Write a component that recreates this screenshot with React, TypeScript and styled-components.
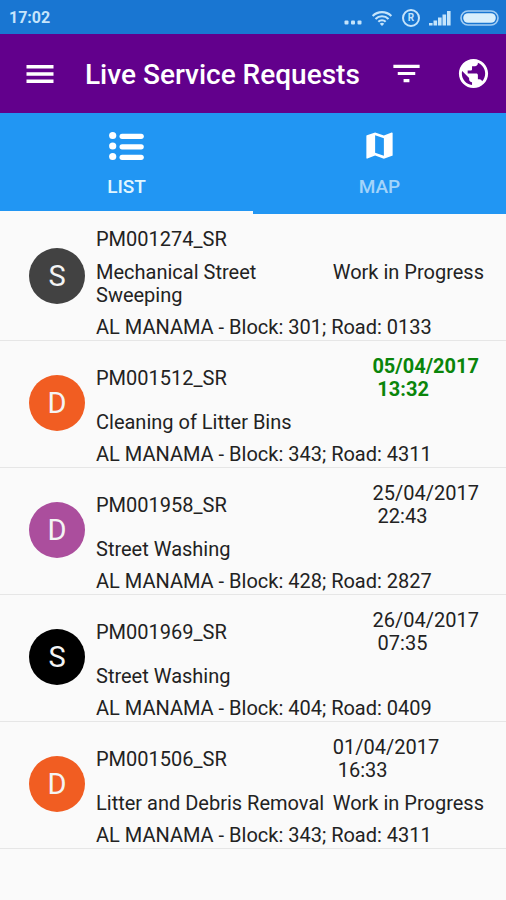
import React from "react";
import styled, { createGlobalStyle } from "styled-components";

const GlobalStyle = createGlobalStyle`
  * { box-sizing: border-box; }
  body {
    margin: 0;
    background: #fafafa;
    color: #222;
    font-family: Roboto, "Liberation Sans", sans-serif;
  }
`;

const Screen = styled.div`
  min-height: 100vh;
  background: #fafafa;
`;

const StatusBar = styled.div`
  height: 34px;
  padding: 2px 7px 0 9px;
  display: flex;
  align-items: center;
  justify-content: space-between;
  background: #1976d2;
  color: #c5e4fb;
`;

const Clock = styled.time`
  font-size: 16px;
  line-height: 20px;
  font-weight: 700;
`;

const StatusIcons = styled.div`
  display: flex;
  align-items: center;
  gap: 9px;
`;

const Registered = styled.span`
  width: 18px;
  height: 18px;
  border: 2px solid currentColor;
  border-radius: 50%;
  display: flex;
  align-items: center;
  justify-content: center;
  font-size: 10px;
  line-height: 10px;
  font-weight: 700;
`;

const AppBar = styled.header`
  height: 79px;
  padding: 0 15px 0 22px;
  display: flex;
  align-items: center;
  background: #62008c;
  color: #fff;
`;

const Title = styled.h1`
  flex: 1;
  margin: 0 0 0 27px;
  padding-top: 3px;
  font-size: 28px;
  line-height: 36px;
  font-weight: 500;
  white-space: nowrap;
`;

const Actions = styled.div`
  display: flex;
  gap: 32px;
`;

const IconButton = styled.button`
  padding: 0;
  border: 0;
  background: none;
  color: inherit;
  display: flex;
  cursor: pointer;
`;

const Tabs = styled.div`
  display: grid;
  grid-template-columns: 1fr 1fr;
  background: #2196f3;
`;

const Tab = styled.button<{ $active?: boolean }>`
  height: 101px;
  padding: 15px 0 0;
  border: 0;
  border-bottom: 3px solid ${(p) => (p.$active ? "#fafafa" : "#2196f3")};
  background: none;
  color: #fff;
  display: flex;
  flex-direction: column;
  align-items: center;
  gap: 12px;
  font-family: inherit;
  cursor: pointer;
`;

const TabLabel = styled.span<{ $active?: boolean }>`
  font-size: 19px;
  line-height: 24px;
  font-weight: 500;
  color: ${(p) => (p.$active ? "#e0f6ff" : "#a3d4fa")};
`;

const List = styled.ul`
  margin: 0;
  padding: 0;
  list-style: none;
  font-size: 20px;
  line-height: 23px;
`;

const Row = styled.li`
  padding: 0 22px 0 29px;
  display: flex;
  align-items: center;
  gap: 11px;
  border-bottom: 1px solid #e6e6e6;
`;

const Avatar = styled.div<{ $color: string }>`
  flex: none;
  width: 56px;
  height: 56px;
  margin-bottom: 2px;
  border-radius: 50%;
  background: ${(p) => p.$color};
  color: #f4f4f4;
  display: flex;
  align-items: center;
  justify-content: center;
  font-size: 29px;
  line-height: 36px;
`;

const Details = styled.div`
  flex: 1;
  padding: 14px 0 1px;
  display: grid;
  grid-template-columns: 1fr auto;
  column-gap: 8px;
`;

const Reference = styled.div`
  align-self: center;
`;

const Schedule = styled.div<{ $done?: boolean }>`
  grid-column: 2;
  white-space: pre;
  font-weight: ${(p) => (p.$done ? 700 : 400)};
  color: ${(p) => (p.$done ? "#0a850a" : "inherit")};
`;

const Category = styled.div`
  grid-column: 1;
  margin-top: 10px;
`;

const Status = styled.div`
  grid-column: 2;
  margin-top: 10px;
  white-space: nowrap;
`;

const Address = styled.div`
  grid-column: 1 / -1;
  margin-top: 9px;
`;

type Request = {
  id: string;
  letter: string;
  color: string;
  category: string;
  address: string;
  date?: string;
  time?: string;
  status?: string;
  done?: boolean;
};

const requests: Request[] = [
  { id: "PM001274_SR", letter: "S", color: "#424242", category: "Mechanical Street Sweeping", address: "AL MANAMA - Block: 301; Road: 0133", status: "Work in Progress" },
  { id: "PM001512_SR", letter: "D", color: "#f15d22", category: "Cleaning of Litter Bins", address: "AL MANAMA - Block: 343; Road: 4311", date: "05/04/2017", time: "13:32", done: true },
  { id: "PM001958_SR", letter: "D", color: "#ab4e9d", category: "Street Washing", address: "AL MANAMA - Block: 428; Road: 2827", date: "25/04/2017", time: "22:43" },
  { id: "PM001969_SR", letter: "S", color: "#000", category: "Street Washing", address: "AL MANAMA - Block: 404; Road: 0409", date: "26/04/2017", time: "07:35" },
  { id: "PM001506_SR", letter: "D", color: "#f15d22", category: "Litter and Debris Removal", address: "AL MANAMA - Block: 343; Road: 4311", date: "01/04/2017", time: "16:33", status: "Work in Progress" },
];

const Glyph = ({ d, size = 35 }: { d: string; size?: number }) => (
  <svg width={size} height={size} viewBox="0 0 24 24" fill="currentColor" aria-hidden="true">
    <path d={d} />
  </svg>
);

const MENU = "M3 18h18v-2.3H3V18zm0-4.85h18v-2.3H3v2.3zM3 6v2.3h18V6H3z";
const FILTER = "M10 18h4v-2.2h-4V18zM3 6v2.2h18V6H3zm3 7.1h12v-2.2H6v2.2z";
const GLOBE =
  "M12 2C6.48 2 2 6.48 2 12s4.48 10 10 10 10-4.48 10-10S17.52 2 12 2zm-1 17.93c-3.95-.49-7-3.85-7-7.93 0-.62.08-1.21.21-1.79L9 15v1c0 1.1.9 2 2 2v1.93zm6.9-2.54c-.26-.81-1-1.39-1.9-1.39h-1v-3c0-.55-.45-1-1-1H8v-2h2c.55 0 1-.45 1-1V7h2c1.1 0 2-.9 2-2v-.41c2.93 1.19 5 4.06 5 7.41 0 2.08-.8 3.97-2.1 5.39z";
const MAP =
  "M20.5 3l-.16.03L15 5.1 9 3 3.36 4.9c-.21.07-.36.25-.36.48V20.5c0 .28.22.5.5.5l.16-.03L9 18.9l6 2.1 5.64-1.9c.21-.07.36-.25.36-.48V3.5c0-.28-.22-.5-.5-.5zM15 19l-6-2.11V5l6 2.11V19z";

const DotsIcon = () => (
  <svg width="18" height="18" viewBox="0 0 18 18" fill="currentColor" aria-hidden="true">
    <rect x="0.5" y="11.5" width="4" height="4" rx="1" />
    <rect x="7" y="11.5" width="4" height="4" rx="1" />
    <rect x="13.5" y="11.5" width="4" height="4" rx="1" />
  </svg>
);

const WifiIcon = () => (
  <svg width="22" height="17" viewBox="0 0 24 18" fill="none" stroke="currentColor" strokeWidth="2.3" aria-hidden="true">
    <path d="M1.8 6.2a14.5 14.5 0 0 1 20.4 0" />
    <path d="M4.9 9.5a10 10 0 0 1 14.2 0" />
    <path d="M8 12.6a5.6 5.6 0 0 1 8 0" />
    <path d="M12 17.3l-2.4-2.6a3.5 3.5 0 0 1 4.8 0z" fill="currentColor" stroke="none" />
  </svg>
);

const SignalIcon = () => (
  <svg width="22" height="16" viewBox="0 0 22 16" fill="currentColor" aria-hidden="true">
    <rect x="0" y="13" width="3.6" height="2.5" />
    <rect x="4.5" y="10.5" width="3.6" height="5" />
    <rect x="9" y="7.5" width="3.6" height="8" />
    <rect x="13.5" y="4.5" width="3.6" height="11" />
    <rect x="18" y="1" width="3.6" height="14.5" />
  </svg>
);

const BatteryIcon = () => (
  <svg width="39" height="16" viewBox="0 0 39 16" aria-hidden="true">
    <rect x="1" y="1" width="37" height="14" rx="7" fill="none" stroke="currentColor" strokeWidth="1.6" opacity="0.8" />
    <rect x="3.2" y="3.2" width="32.6" height="9.6" rx="4.8" fill="#d9effc" />
  </svg>
);

const ListIcon = () => (
  <svg width="35" height="35" viewBox="0 0 35 35" fill="#fff" aria-hidden="true">
    {[7.5, 18, 28.5].map((y) => (
      <g key={y}>
        <circle cx="3.7" cy={y} r="3.6" />
        <rect x="10.5" y={y - 1.8} width="24.3" height="5.2" rx="2.6" />
      </g>
    ))}
  </svg>
);

export default function App() {
  return (
    <Screen>
      <GlobalStyle />
      <StatusBar>
        <Clock>17:02</Clock>
        <StatusIcons>
          <DotsIcon />
          <WifiIcon />
          <Registered>R</Registered>
          <SignalIcon />
          <BatteryIcon />
        </StatusIcons>
      </StatusBar>
      <AppBar>
        <IconButton aria-label="Menu">
          <Glyph d={MENU} size={36} />
        </IconButton>
        <Title>Live Service Requests</Title>
        <Actions>
          <IconButton aria-label="Filter">
            <Glyph d={FILTER} />
          </IconButton>
          <IconButton aria-label="Region">
            <Glyph d={GLOBE} />
          </IconButton>
        </Actions>
      </AppBar>
      <Tabs role="tablist">
        <Tab role="tab" aria-selected="true" $active>
          <ListIcon />
          <TabLabel $active>LIST</TabLabel>
        </Tab>
        <Tab role="tab" aria-selected="false">
          <Glyph d={MAP} />
          <TabLabel>MAP</TabLabel>
        </Tab>
      </Tabs>
      <List>
        {requests.map((r) => (
          <Row key={r.id}>
            <Avatar $color={r.color}>{r.letter}</Avatar>
            <Details>
              <Reference>{r.id}</Reference>
              {r.date && <Schedule $done={r.done}>{`${r.date} \n ${r.time}`}</Schedule>}
              <Category>{r.category}</Category>
              {r.status && <Status>{r.status}</Status>}
              <Address>{r.address}</Address>
            </Details>
          </Row>
        ))}
      </List>
    </Screen>
  );
}
